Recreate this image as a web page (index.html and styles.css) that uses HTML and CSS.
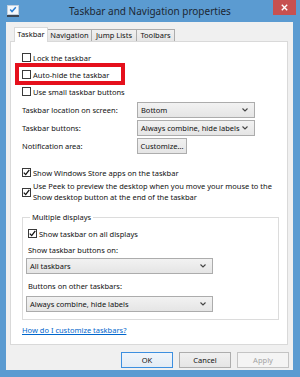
FILE: index.html
```html
<!DOCTYPE html>
<html>
<head>
<meta charset="utf-8">
<link rel="stylesheet" href="styles.css">
</head>
<body>
<div class="window">
  <div class="titlebar">
    <svg class="app-icon" width="12" height="12" viewBox="0 0 12 12">
      <rect x="0.5" y="0.5" width="11" height="9" fill="#f4f8fc" stroke="#c3d0dd"/>
      <path d="M3.2 4.6 L5 6.6 L8.8 2.2" stroke="#2a7fd4" stroke-width="1.5" fill="none"/>
      <rect x="0" y="10" width="12" height="2" fill="#3a4654"/>
    </svg>
    <div class="title">Taskbar and Navigation properties</div>
    <div class="close">
      <svg width="7" height="7" viewBox="0 0 7 7"><path d="M0.8 0.8 L6.2 6.2 M6.2 0.8 L0.8 6.2" stroke="#fff" stroke-width="1.4"/></svg>
    </div>
  </div>
  <div class="client">
    <div class="tabs">
      <div class="tab selected w1">Taskbar</div>
      <div class="tab w2">Navigation</div>
      <div class="tab w3">Jump Lists</div>
      <div class="tab w4">Toolbars</div>
    </div>
    <div class="panel">
      <div class="check-row"><span class="box"></span><span>Lock the taskbar</span></div>
      <div class="check-row marked"><span class="box"></span><span>Auto-hide the taskbar</span><span class="highlight"></span></div>
      <div class="check-row"><span class="box"></span><span>Use small taskbar buttons</span></div>

      <div class="field-row first"><span class="label">Taskbar location on screen:</span>
        <div class="select w-main"><span>Bottom</span><svg class="chev" width="6" height="4" viewBox="0 0 6 4"><path d="M0.5 0.5 L3 3 L5.5 0.5" stroke="#444" stroke-width="1.1" fill="none"/></svg></div>
      </div>
      <div class="field-row"><span class="label">Taskbar buttons:</span>
        <div class="select w-main"><span>Always combine, hide labels</span><svg class="chev" width="6" height="4" viewBox="0 0 6 4"><path d="M0.5 0.5 L3 3 L5.5 0.5" stroke="#444" stroke-width="1.1" fill="none"/></svg></div>
      </div>
      <div class="field-row"><span class="label">Notification area:</span>
        <div class="btn customize">Customize...</div>
      </div>

      <div class="check-row store"><span class="box checked"><svg width="7" height="7" viewBox="0 0 7 7"><path d="M0.8 3.6 L2.7 5.6 L6.3 0.9" stroke="#111" stroke-width="1.3" fill="none"/></svg></span><span>Show Windows Store apps on the taskbar</span></div>
      <div class="check-row peek"><span class="box checked"><svg width="7" height="7" viewBox="0 0 7 7"><path d="M0.8 3.6 L2.7 5.6 L6.3 0.9" stroke="#111" stroke-width="1.3" fill="none"/></svg></span><span class="two-line">Use Peek to preview the desktop when you move your mouse to the<br>Show desktop button at the end of the taskbar</span></div>

      <fieldset class="group">
        <legend>Multiple displays</legend>
        <div class="check-row"><span class="box checked"><svg width="7" height="7" viewBox="0 0 7 7"><path d="M0.8 3.6 L2.7 5.6 L6.3 0.9" stroke="#111" stroke-width="1.3" fill="none"/></svg></span><span>Show taskbar on all displays</span></div>
        <div class="group-label">Show taskbar buttons on:</div>
        <div class="select w-group"><span>All taskbars</span><svg class="chev" width="6" height="4" viewBox="0 0 6 4"><path d="M0.5 0.5 L3 3 L5.5 0.5" stroke="#444" stroke-width="1.1" fill="none"/></svg></div>
        <div class="group-label second">Buttons on other taskbars:</div>
        <div class="select w-group"><span>Always combine, hide labels</span><svg class="chev" width="6" height="4" viewBox="0 0 6 4"><path d="M0.5 0.5 L3 3 L5.5 0.5" stroke="#444" stroke-width="1.1" fill="none"/></svg></div>
      </fieldset>

      <div class="link-row"><a class="link" href="#">How do I customize taskbars?</a></div>
    </div>
    <div class="buttons">
      <div class="btn default">OK</div>
      <div class="btn">Cancel</div>
      <div class="btn disabled">Apply</div>
    </div>
  </div>
</div>
</body>
</html>
```

FILE: styles.css
```css
* { box-sizing: border-box; }
html, body { margin: 0; padding: 0; }
body {
  background: #5b9bd1;
  font-family: "Noto Sans", "Open Sans", sans-serif;
  font-size: 7.5px;
  color: #111;
}
.window {
  width: 300px;
  height: 377px;
  background: #5b9bd1;
  overflow: hidden;
}
.titlebar {
  height: 22px;
  display: grid;
  grid-template-columns: 1fr auto 1fr;
  align-items: start;
}
.app-icon {
  margin: 5px 0 0 7px;
  justify-self: start;
}
.title {
  font-size: 10px;
  line-height: 12px;
  padding-top: 5px;
  color: #1c2733;
  white-space: nowrap;
}
.close {
  justify-self: end;
  width: 23px;
  height: 15px;
  margin-right: 4px;
  background: #c75050;
  display: flex;
  align-items: center;
  justify-content: center;
}
.client {
  margin: 0 7px 0 6px;
  height: 348px;
  background: #f0f0f0;
  padding: 5px 5px 0 4px;
}
.tabs {
  display: flex;
  align-items: flex-end;
  padding-left: 4px;
  height: 15px;
  position: relative;
  z-index: 1;
}
.tab {
  height: 12px;
  border: 1px solid #acacac;
  border-bottom: none;
  background: linear-gradient(#f0f0f0, #e5e5e5);
  text-align: center;
  line-height: 10px;
  white-space: nowrap;
  margin-bottom: 1px;
  margin-left: -1px;
}
.tab.selected {
  height: 15px;
  background: #fff;
  border-color: #d9d9d9;
  margin-bottom: 0;
  margin-left: 0;
  line-height: 13px;
  position: relative;
  z-index: 2;
}
.w1 { width: 34px; }
.w2 { width: 45px; }
.w3 { width: 46px; }
.w4 { width: 39px; }
.panel {
  height: 304px;
  margin-top: -1px;
  background: #fff;
  border: 1px solid #d9d9d9;
  padding: 7px 8px 0 11px;
}
.check-row {
  height: 17px;
  display: flex;
  align-items: center;
  gap: 2px;
  white-space: nowrap;
}
.box {
  width: 9px;
  height: 9px;
  flex: none;
  border: 1px solid #3a3a3a;
  background: #fff;
  display: flex;
  align-items: center;
  justify-content: center;
}
.marked { position: relative; }
.highlight {
  position: absolute;
  left: -7px;
  top: -3px;
  width: 110px;
  height: 22px;
  border: 4px solid #e5101c;
}
.field-row {
  height: 18px;
  display: flex;
  align-items: center;
  white-space: nowrap;
}
.field-row.first { margin-top: 1px; }
.label { width: 115px; flex: none; }
.select {
  height: 16px;
  border: 1px solid #acacac;
  background: linear-gradient(#f2f2f2, #e5e5e5);
  display: flex;
  align-items: center;
  justify-content: space-between;
  padding: 0 6px 0 3px;
  white-space: nowrap;
}
.w-main { width: 118px; }
.w-group { width: 187px; margin-left: -2px; }
.btn {
  height: 16px;
  width: 52px;
  border: 1px solid #adadad;
  background: linear-gradient(#f0f0f0, #e5e5e5);
  display: flex;
  align-items: center;
  justify-content: center;
  white-space: nowrap;
}
.customize { width: 50px; }
.check-row.store { margin-top: 9px; }
.check-row.peek { height: 22px; margin-top: 0; }
.two-line { line-height: 11px; }
.group {
  margin: 9px 0 0 0;
  padding: 3px 5px 7px 5px;
  border: 1px solid #dcdcdc;
  min-width: 0;
}
.group legend {
  padding: 0 2px;
  margin-left: 2px;
  line-height: 10px;
}
.group-label {
  height: 16px;
  line-height: 16px;
}
.group-label.second { margin-top: 4px; height: 16px; }
.group .select + .group-label { }
.group .group-label + .select { margin-top: 0; }
.group .group-label.second + .select { margin-top: 2px; }
.link-row {
  margin-top: 3px;
  height: 14px;
  display: flex;
  align-items: center;
}
.link {
  color: #0066cc;
  text-decoration: underline;
}
.buttons {
  margin-top: 7px;
  display: flex;
  justify-content: flex-end;
  gap: 6px;
  margin-right: -1px;
}
.btn.default {
  border-color: #3c8fe0;
  background: linear-gradient(#f0f5fb, #e3ecf5);
}
.btn.disabled {
  border-color: #c4c4c4;
  background: #f4f4f4;
  color: #a3a3a3;
}
```
